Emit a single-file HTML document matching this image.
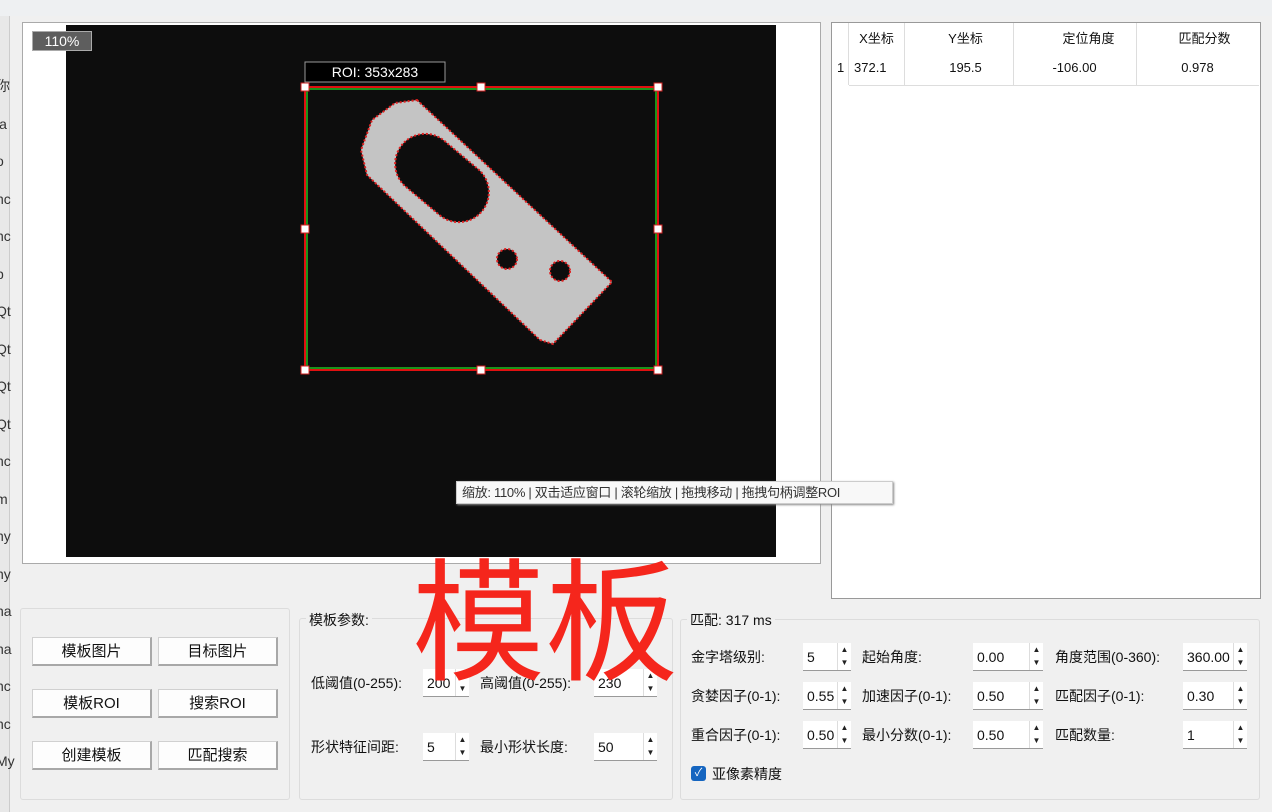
<!DOCTYPE html>
<html><head><meta charset="utf-8"><style>
*{margin:0;padding:0;box-sizing:border-box}
body{width:1272px;height:812px;background:#f0f0f0;position:relative;overflow:hidden;font-family:"Liberation Sans","Noto Sans CJK SC",sans-serif;font-size:14px;color:#111}
.a{position:absolute}
.btn{position:absolute;width:120px;height:29px;background:#fdfdfd;border:1px solid #d0d0d0;border-bottom:2px solid #a8a8a8;border-right:2px solid #a8a8a8;text-align:center;line-height:28px;font-size:15px}
.lbl{position:absolute;font-size:14px;line-height:20px;white-space:nowrap}
.sp{position:absolute;height:28px;background:#fff;border-bottom:1px solid #999;font-size:14px;line-height:28px;padding-left:4px}
.sp i{position:absolute;right:0;top:0;width:14px;height:27px;border-left:1px solid #ddd;font-style:normal;font-size:8px;line-height:13px;text-align:center;color:#222}
.grp{position:absolute;border:1px solid #dcdcdc;border-radius:3px}
</style></head><body>
<div class="a" style="left:0;top:0;width:1272px;height:16px;background:#eef0f2"></div>
<div class="a" style="left:0;top:16px;width:10px;height:796px;background:#e8e8e8;border-right:1px solid #ccc"></div>
<div class="a" style="left:-4px;top:68px;font-size:14px;line-height:37.5px;color:#333">
你<br>la<br>o<br>nc<br>nc<br>p<br>Qt<br>Qt<br>Qt<br>Qt<br>nc<br>m<br>ny<br>ny<br>na<br>na<br>nc<br>nc<br>My</div>
<div class="a" style="left:22px;top:22px;width:799px;height:542px;background:#fff;border:1px solid #aaa"></div>
<div class="a" style="left:66px;top:25px;width:710px;height:532px;background:#0d0d0d"></div>
<div class="a" style="left:32px;top:31px;width:60px;height:20px;background:#5e5e5e;border:1px solid #aaa;color:#fff;font-size:14px;text-align:center;line-height:19px">110%</div>
<svg class="a" style="left:0;top:0" width="820" height="560">
<rect x="305" y="62" width="140" height="20" fill="#000" stroke="#999"/>
<text x="375" y="77" fill="#fff" font-size="14" text-anchor="middle" font-family="Liberation Sans">ROI: 353x283</text>
<path d="M417 100 L612 282 L553 344 L540 340 L367 175 L361 150 L372 120 L395 103 Z" fill="#c4c4c4" stroke="#e02020" stroke-width="2" stroke-dasharray="2 2"/>
<g transform="translate(442 178) rotate(40)"><rect x="-52" y="-30" width="104" height="60" rx="30" fill="#0d0d0d" stroke="#e02020" stroke-width="2" stroke-dasharray="2 2"/></g>
<circle cx="507" cy="259" r="10" fill="#0d0d0d" stroke="#e02020" stroke-width="2" stroke-dasharray="2 2"/>
<circle cx="560" cy="271" r="10" fill="#0d0d0d" stroke="#e02020" stroke-width="2" stroke-dasharray="2 2"/>
<rect x="305" y="87" width="353" height="283" fill="none" stroke="#e01010" stroke-width="2"/>
<rect x="307" y="89" width="349" height="279" fill="none" stroke="#20c020" stroke-width="1.5"/>
<g fill="#fff" stroke="#d02020" stroke-width="1"><rect x="301" y="83" width="8" height="8"/><rect x="477" y="83" width="8" height="8"/><rect x="654" y="83" width="8" height="8"/><rect x="301" y="225" width="8" height="8"/><rect x="654" y="225" width="8" height="8"/><rect x="301" y="366" width="8" height="8"/><rect x="477" y="366" width="8" height="8"/><rect x="654" y="366" width="8" height="8"/></g>
</svg>
<div class="a" style="left:831px;top:22px;width:430px;height:577px;background:#fff;border:1px solid #999"></div>
<div class="a" style="left:832px;top:23px;width:17px;height:62px;background:#fff;border-right:1px solid #ddd"></div>
<div class="a" style="left:849px;top:85px;width:410px;height:1px;background:#ddd"></div>
<div class="a" style="left:849px;top:23px;width:410px;height:28px;font-size:13px">
<span class="a" style="left:0;width:55px;text-align:center;top:5px">X坐标</span>
<span class="a" style="left:55px;width:123px;text-align:center;top:5px">Y坐标</span>
<span class="a" style="left:178px;width:123px;text-align:center;top:5px">定位角度</span>
<span class="a" style="left:301px;width:109px;text-align:center;top:5px">匹配分数</span></div>
<div class="a" style="left:904px;top:23px;width:1px;height:62px;background:#ddd"></div>
<div class="a" style="left:1013px;top:23px;width:1px;height:62px;background:#ddd"></div>
<div class="a" style="left:1136px;top:23px;width:1px;height:62px;background:#ddd"></div>
<div class="a" style="left:849px;top:60px;width:410px;font-size:13px">
<span class="a" style="left:-12px">1</span>
<span class="a" style="left:5px">372.1</span>
<span class="a" style="left:55px;width:123px;text-align:center">195.5</span>
<span class="a" style="left:164px;width:123px;text-align:center">-106.00</span>
<span class="a" style="left:287px;width:123px;text-align:center">0.978</span></div>
<div class="a" style="left:456px;top:481px;width:437px;height:23px;background:#f8f8f8;border:1px solid #ccc;box-shadow:1px 1px 2px #888;font-size:13px;letter-spacing:-0.3px;line-height:21px;padding-left:5px;color:#333;white-space:nowrap;overflow:hidden">缩放: 110% | 双击适应窗口 | 滚轮缩放 | 拖拽移动 | 拖拽句柄调整ROI</div>

<div class="grp" style="left:20px;top:608px;width:270px;height:192px"></div>
<div class="btn" style="left:32px;top:637px">模板图片</div>
<div class="btn" style="left:158px;top:637px">目标图片</div>
<div class="btn" style="left:32px;top:689px">模板ROI</div>
<div class="btn" style="left:158px;top:689px">搜索ROI</div>
<div class="btn" style="left:32px;top:741px">创建模板</div>
<div class="btn" style="left:158px;top:741px">匹配搜索</div>

<div class="grp" style="left:299px;top:618px;width:374px;height:182px"></div>
<div class="lbl" style="left:306px;top:610px;background:#f0f0f0;padding:0 3px">模板参数:</div>
<div class="lbl" style="left:311px;top:673px">低阈值(0-255):</div>
<div class="sp" style="left:423px;top:669px;width:46px">200<i>▲<br>▼</i></div>
<div class="lbl" style="left:480px;top:673px">高阈值(0-255):</div>
<div class="sp" style="left:594px;top:669px;width:63px">230<i>▲<br>▼</i></div>
<div class="lbl" style="left:311px;top:737px">形状特征间距:</div>
<div class="sp" style="left:423px;top:733px;width:46px">5<i>▲<br>▼</i></div>
<div class="lbl" style="left:480px;top:737px">最小形状长度:</div>
<div class="sp" style="left:594px;top:733px;width:63px">50<i>▲<br>▼</i></div>

<div class="grp" style="left:680px;top:619px;width:580px;height:181px"></div>
<div class="lbl" style="left:687px;top:610px;background:#f0f0f0;padding:0 3px">匹配:  317 ms</div>
<div class="lbl" style="left:691px;top:647px">金字塔级别:</div>
<div class="sp" style="left:803px;top:643px;width:48px">5<i>▲<br>▼</i></div>
<div class="lbl" style="left:862px;top:647px">起始角度:</div>
<div class="sp" style="left:973px;top:643px;width:70px">0.00<i>▲<br>▼</i></div>
<div class="lbl" style="left:1055px;top:647px">角度范围(0-360):</div>
<div class="sp" style="left:1183px;top:643px;width:64px">360.00<i>▲<br>▼</i></div>
<div class="lbl" style="left:691px;top:686px">贪婪因子(0-1):</div>
<div class="sp" style="left:803px;top:682px;width:48px">0.55<i>▲<br>▼</i></div>
<div class="lbl" style="left:862px;top:686px">加速因子(0-1):</div>
<div class="sp" style="left:973px;top:682px;width:70px">0.50<i>▲<br>▼</i></div>
<div class="lbl" style="left:1055px;top:686px">匹配因子(0-1):</div>
<div class="sp" style="left:1183px;top:682px;width:64px">0.30<i>▲<br>▼</i></div>
<div class="lbl" style="left:691px;top:725px">重合因子(0-1):</div>
<div class="sp" style="left:803px;top:721px;width:48px">0.50<i>▲<br>▼</i></div>
<div class="lbl" style="left:862px;top:725px">最小分数(0-1):</div>
<div class="sp" style="left:973px;top:721px;width:70px">0.50<i>▲<br>▼</i></div>
<div class="lbl" style="left:1055px;top:725px">匹配数量:</div>
<div class="sp" style="left:1183px;top:721px;width:64px">1<i>▲<br>▼</i></div>
<div class="a" style="left:691px;top:766px;width:15px;height:15px;background:#1565c0;border-radius:3px;color:#fff;font-size:11px;line-height:15px;text-align:center">✓</div>
<div class="lbl" style="left:712px;top:764px">亚像素精度</div>

<div class="a" style="left:412px;top:534px;font-family:'Noto Sans CJK SC',sans-serif;font-size:133px;line-height:1.2;color:#f5261c;white-space:nowrap">模板</div>
</body></html>
